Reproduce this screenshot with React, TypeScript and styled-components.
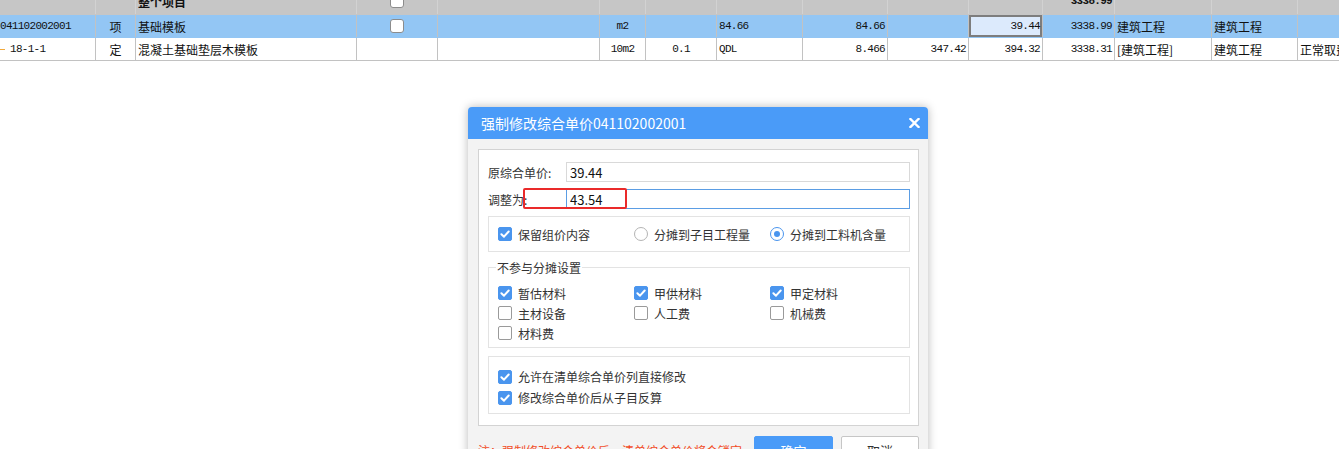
import styled, { createGlobalStyle } from "styled-components";

const GlobalStyle = createGlobalStyle`
  html, body {
    margin: 0;
    padding: 0;
    background: #ffffff;
    overflow: hidden;
  }
  body {
    font-family: "Noto Sans CJK SC", "Noto Sans", sans-serif;
    color: #222;
  }
`;

const COLS = [96, 40, 221, 81, 162, 46, 71, 86, 85, 81, 74, 72, 97, 86, 100];

type Tone = "head" | "selected" | "plain";
type Align = "left" | "center" | "right";

const toneBg: Record<Tone, string> = {
  head: "#c6c6c6",
  selected: "#93c6f4",
  plain: "#ffffff",
};

const Page = styled.div`
  position: relative;
  width: 1339px;
  height: 449px;
  overflow: hidden;
`;

const Sheet = styled.div`
  margin-top: -8px;
`;

const Row = styled.div<{ $tone: Tone }>`
  display: grid;
  grid-template-columns: ${COLS.map((c) => `${c}px`).join(" ")};
  height: 23px;
  box-sizing: border-box;
  background: ${({ $tone }) => toneBg[$tone]};
  border-bottom: 1px solid ${({ $tone }) => ($tone === "plain" ? "#c2c2c2" : toneBg[$tone])};
`;

const Cell = styled.div<{
  $align?: Align;
  $mono?: boolean;
  $bold?: boolean;
  $active?: boolean;
  $flush?: boolean;
  $tone: Tone;
}>`
  display: flex;
  align-items: center;
  justify-content: ${({ $align }) =>
    $align === "center" ? "center" : $align === "right" ? "flex-end" : "flex-start"};
  padding: ${({ $tone }) => ($tone === "head" ? "0 2px 4px" : "0 2px")};
  padding-left: ${({ $flush }) => ($flush ? "0" : "2px")};
  box-sizing: border-box;
  overflow: hidden;
  white-space: nowrap;
  border-right: 1px solid ${({ $tone }) => ($tone === "head" ? "#d2d2d2" : "#c2c2c2")};
  font-family: ${({ $mono }) =>
    $mono ? `"Liberation Mono", "Noto Sans CJK SC", monospace` : `"Noto Sans CJK SC", sans-serif`};
  font-size: ${({ $mono }) => ($mono ? "11px" : "12px")};
  letter-spacing: ${({ $mono }) => ($mono ? "-0.7px" : "0")};
  font-weight: ${({ $bold }) => ($bold ? 700 : 400)};
  color: #111;
  background: ${({ $active }) => ($active ? "#dceafc" : "transparent")};
  box-shadow: ${({ $active }) => ($active ? "inset 0 0 0 2px #7d7d7d" : "none")};
`;

const GridBox = styled.span`
  width: 14px;
  height: 14px;
  box-sizing: border-box;
  border: 1px solid #8c8c8c;
  border-radius: 3px;
  background: #fff;
`;

const TreeDash = styled.span`
  width: 5px;
  height: 1px;
  background: #f2a93b;
  margin-right: 5px;
`;

/* dialog */

const Dialog = styled.div`
  position: absolute;
  left: 468px;
  top: 107px;
  width: 460px;
  background: #f3f3f3;
  border-radius: 4px;
  box-shadow: 0 0 10px rgba(0, 0, 0, 0.28);
`;

const TitleBar = styled.div`
  height: 32px;
  background: #4a9bf8;
  border-radius: 4px 4px 0 0;
  display: flex;
  align-items: center;
  justify-content: space-between;
  padding: 0 8px 0 13px;
  color: #fff;
  font-size: 14px;
`;

const Body = styled.div`
  padding: 10px 9px 0 10px;
`;

const Panel = styled.div`
  border: 1px solid #d3d3d3;
  background: #ffffff;
  padding: 12px 8px 11px 9px;
  display: flex;
  flex-direction: column;
`;

const FieldRow = styled.div<{ $gap?: number }>`
  display: grid;
  grid-template-columns: 78px 1fr;
  align-items: center;
  height: 20px;
  margin-top: ${({ $gap }) => $gap ?? 0}px;
`;

const FieldLabel = styled.span`
  font-size: 12px;
  color: #333;
`;

const TextInput = styled.input<{ $focused?: boolean }>`
  height: 20px;
  box-sizing: border-box;
  border: 1px solid ${({ $focused }) => ($focused ? "#5b9de4" : "#d9d9d9")};
  outline: none;
  padding: 0 3px;
  font-family: "Noto Sans CJK SC", sans-serif;
  font-size: 13px;
  color: #111;
  background: #fff;
`;

const OptionBox = styled.div`
  margin-top: 7px;
  height: 36px;
  box-sizing: border-box;
  border: 1px solid #e3e3e3;
  padding-left: 9px;
  display: grid;
  grid-template-columns: 136px 136px 136px;
  align-items: center;
`;

const Group = styled.fieldset`
  margin: 7px 0 0;
  padding: 7px 9px 4px;
  border: 1px solid #e3e3e3;
  min-width: 0;
  display: grid;
  grid-template-columns: 136px 136px 136px;
  grid-auto-rows: 20px;
  align-items: center;
`;

const Legend = styled.legend`
  padding: 0 1px;
  margin-left: -2px;
  font-size: 12px;
  line-height: 17px;
  color: #333;
`;

const CheckList = styled.div`
  margin-top: 8px;
  border: 1px solid #e3e3e3;
  padding: 9px 9px 5px;
  display: grid;
  grid-auto-rows: 21px;
  align-items: center;
`;

const Option = styled.label`
  display: flex;
  align-items: center;
  gap: 6px;
  font-size: 12px;
  color: #333;
  white-space: nowrap;
`;

const Box = styled.span<{ $checked?: boolean }>`
  width: 14px;
  height: 14px;
  box-sizing: border-box;
  border-radius: 2px;
  border: 1px solid ${({ $checked }) => ($checked ? "#4a95ee" : "#9a9a9a")};
  background: ${({ $checked }) => ($checked ? "#4a95ee" : "#fff")};
  display: flex;
  align-items: center;
  justify-content: center;
`;

const Radio = styled.span<{ $checked?: boolean }>`
  width: 14px;
  height: 14px;
  box-sizing: border-box;
  border-radius: 50%;
  border: 1px solid ${({ $checked }) => ($checked ? "#4a95ee" : "#b4b4b4")};
  background: #fff;
  display: flex;
  align-items: center;
  justify-content: center;
  &::after {
    content: "";
    width: 6px;
    height: 6px;
    border-radius: 50%;
    background: ${({ $checked }) => ($checked ? "#4a95ee" : "transparent")};
  }
`;

const Footer = styled.div`
  display: flex;
  align-items: center;
  gap: 8px;
  margin-top: 10px;
  height: 28px;
  padding-bottom: 10px;
`;

const Note = styled.span`
  flex: 1;
  font-size: 12px;
  color: #f24b25;
  white-space: nowrap;
`;

const Button = styled.button<{ $primary?: boolean }>`
  height: 28px;
  width: ${({ $primary }) => ($primary ? 79 : 78)}px;
  border-radius: 2px;
  box-sizing: border-box;
  border: 1px solid ${({ $primary }) => ($primary ? "#4a9bf8" : "#c6c6c6")};
  background: ${({ $primary }) => ($primary ? "#4a9bf8" : "#ffffff")};
  color: ${({ $primary }) => ($primary ? "#fff" : "#333")};
  font-family: "Noto Sans CJK SC", sans-serif;
  font-size: 13px;
`;

const Marker = styled.div`
  position: absolute;
  left: 523px;
  top: 188px;
  width: 104px;
  height: 21px;
  box-sizing: border-box;
  border: 2px solid #ea2a2a;
  border-radius: 2px;
  pointer-events: none;
`;

const Check = () => (
  <svg width="10" height="10" viewBox="0 0 10 10">
    <path d="M1.4 5.2 L4 7.7 L8.7 2.5" fill="none" stroke="#fff" strokeWidth="2" strokeLinecap="round" strokeLinejoin="round" />
  </svg>
);

const CheckOption = ({ label, checked }: { label: string; checked?: boolean }) => (
  <Option>
    <Box $checked={checked}>{checked && <Check />}</Box>
    {label}
  </Option>
);

type CellDef = { text?: string; align?: Align; mono?: boolean; bold?: boolean; active?: boolean; box?: boolean; dash?: boolean };

const rows: { tone: Tone; cells: CellDef[] }[] = [
  {
    tone: "head",
    cells: [
      {}, {}, { text: "整个项目", bold: true }, { box: true }, {}, {}, {}, {}, {}, {}, {},
      { text: "3338.99", align: "right", mono: true, bold: true }, {}, {}, {},
    ],
  },
  {
    tone: "selected",
    cells: [
      { text: "041102002001", mono: true },
      { text: "项", align: "center" },
      { text: "基础模板" },
      { box: true },
      {},
      { text: "m2", align: "center", mono: true },
      {},
      { text: "84.66", mono: true },
      { text: "84.66", align: "right", mono: true },
      {},
      { text: "39.44", align: "right", mono: true, active: true },
      { text: "3338.99", align: "right", mono: true },
      { text: "建筑工程" },
      { text: "建筑工程" },
      {},
    ],
  },
  {
    tone: "plain",
    cells: [
      { text: "18-1-1", mono: true, dash: true },
      { text: "定", align: "center" },
      { text: "混凝土基础垫层木模板" },
      {},
      {},
      { text: "10m2", align: "center", mono: true },
      { text: "0.1", align: "center", mono: true },
      { text: "QDL", mono: true },
      { text: "8.466", align: "right", mono: true },
      { text: "347.42", align: "right", mono: true },
      { text: "394.32", align: "right", mono: true },
      { text: "3338.31", align: "right", mono: true },
      { text: "[建筑工程]" },
      { text: "建筑工程" },
      { text: "正常取费" },
    ],
  },
];

export default function App() {
  return (
    <Page>
      <GlobalStyle />
      <Sheet>
        {rows.map((row, ri) => (
          <Row key={ri} $tone={row.tone}>
            {row.cells.map((c, ci) => (
              <Cell
                key={ci}
                $tone={row.tone}
                $align={c.box ? "center" : c.align}
                $mono={c.mono}
                $bold={c.bold}
                $active={c.active}
                $flush={ci === 0}
              >
                {c.dash && <TreeDash />}
                {c.box ? <GridBox /> : c.text}
              </Cell>
            ))}
          </Row>
        ))}
      </Sheet>

      <Dialog>
        <TitleBar>
          <span>强制修改综合单价041102002001</span>
          <svg width="11" height="10" viewBox="0 0 11 10">
            <path d="M1.5 1 L9.5 9 M9.5 1 L1.5 9" stroke="#fff" strokeWidth="2.4" strokeLinecap="square" />
          </svg>
        </TitleBar>
        <Body>
          <Panel>
            <FieldRow>
              <FieldLabel>原综合单价:</FieldLabel>
              <TextInput readOnly value="39.44" />
            </FieldRow>
            <FieldRow $gap={7}>
              <FieldLabel>调整为:</FieldLabel>
              <TextInput readOnly value="43.54" $focused />
            </FieldRow>

            <OptionBox>
              <CheckOption label="保留组价内容" checked />
              <Option>
                <Radio />
                分摊到子目工程量
              </Option>
              <Option>
                <Radio $checked />
                分摊到工料机含量
              </Option>
            </OptionBox>

            <Group>
              <Legend>不参与分摊设置</Legend>
              <CheckOption label="暂估材料" checked />
              <CheckOption label="甲供材料" checked />
              <CheckOption label="甲定材料" checked />
              <CheckOption label="主材设备" />
              <CheckOption label="人工费" />
              <CheckOption label="机械费" />
              <CheckOption label="材料费" />
            </Group>

            <CheckList>
              <CheckOption label="允许在清单综合单价列直接修改" checked />
              <CheckOption label="修改综合单价后从子目反算" checked />
            </CheckList>
          </Panel>
          <Footer>
            <Note>注：强制修改综合单价后，清单综合单价将会锁定</Note>
            <Button $primary>确定</Button>
            <Button>取消</Button>
          </Footer>
        </Body>
      </Dialog>

      <Marker />
    </Page>
  );
}
